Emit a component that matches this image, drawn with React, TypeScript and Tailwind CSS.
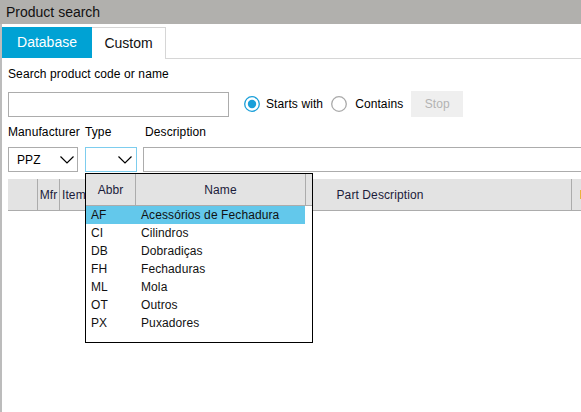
import React from "react";

const Chevron = () => (
  <svg width="14" height="8" viewBox="0 0 14 8" className="block">
    <polyline points="0.5,0.5 7,7 13.5,0.5" fill="none" stroke="#000" strokeWidth="1.2" />
  </svg>
);

const Radio = ({ on }: { on: boolean }) => (
  <svg width="16" height="16" viewBox="0 0 16 16" className="block shrink-0">
    <circle cx="8" cy="8" r="7.3" fill="#fff" stroke={on ? "#1a9fd9" : "#a9a9a9"} strokeWidth="1.3" />
    {on && <circle cx="8" cy="8" r="4.2" fill="#1a9fd9" />}
  </svg>
);

const rows: [string, string][] = [
  ["AF", "Acessórios de Fechadura"],
  ["CI", "Cilindros"],
  ["DB", "Dobradiças"],
  ["FH", "Fechaduras"],
  ["ML", "Mola"],
  ["OT", "Outros"],
  ["PX", "Puxadores"],
];

export default function App() {
  return (
    <div className="relative w-[581px] h-[412px] overflow-hidden bg-white font-['Liberation_Sans',Arial,sans-serif] text-[12px] tracking-[0.1px] text-black">
      <div className="h-[24px] bg-[#b1b0ad] pl-[6px] text-[14px] leading-[25px] tracking-normal text-[#111]">Product search</div>
      <div className="h-[388px] border-l-2 border-[#bcbcbc]">
        <div className="flex h-[35px] pt-[3px]">
          <div className="flex h-[31px] w-[90px] shrink-0 items-center justify-center bg-[#00a2d4] text-[14px] tracking-normal text-white">Database</div>
          <div className="flex h-[32px] w-[74px] shrink-0 items-center justify-center border-t border-r border-[#d6d6d6] text-[14px] tracking-normal text-[#111]">Custom</div>
          <div className="flex-1 border-b border-[#d6d6d6]" />
        </div>
        <div className="pl-[6px]">
          <div className="mt-[8px] leading-[14px]">Search product code or name</div>
          <div className="mt-[10px] flex h-[26px] items-center">
            <div className="h-[25px] w-[221px] shrink-0 border border-[#acacac]" />
            <div className="ml-[15px]"><Radio on /></div>
            <span className="ml-[6px]">Starts with</span>
            <div className="ml-[8px]"><Radio on={false} /></div>
            <span className="ml-[8px]">Contains</span>
            <div className="ml-[8px] flex h-[26px] w-[52px] shrink-0 items-center justify-center bg-[#efefef] text-[#b3b3b3]">Stop</div>
          </div>
          <div className="mt-[8px] flex leading-[14px]">
            <span className="w-[77px] shrink-0">Manufacturer</span>
            <span className="w-[60px] shrink-0">Type</span>
            <span>Description</span>
          </div>
          <div className="mt-[8px] flex h-[25px]">
            <div className="flex w-[70px] shrink-0 items-center justify-between border border-[#acacac] pl-[8px] pr-[3px]">
              <span>PPZ</span>
              <Chevron />
            </div>
            <div className="ml-[7px] flex w-[52px] shrink-0 items-center justify-end border border-[#7dcdee] pr-[4px]">
              <Chevron />
            </div>
            <div className="ml-[6px] w-[500px] shrink-0 border border-[#acacac]" />
          </div>
          <div className="mt-[7px] flex h-[32px] w-[600px] border-b border-[#acacac] bg-[#e3e3e3] text-[#1b1b3a]">
            <div className="w-[30px] shrink-0 border-r border-[#acacac]" />
            <div className="flex w-[22px] shrink-0 items-center justify-center border-r border-[#acacac]">Mfr</div>
            <div className="flex w-[129px] shrink-0 items-center border-r border-[#acacac] pl-[2px]">Item</div>
            <div className="flex w-[383px] shrink-0 items-center justify-center border-r border-[#acacac]">Part Description</div>
            <div className="flex flex-1 items-center pl-[8px]">
              <div className="h-[9px] w-[3px] bg-[#e8b43c]" />
            </div>
          </div>
        </div>
      </div>

      <div className="absolute left-[85px] top-[173px] h-[170px] w-[228px] border border-black bg-white">
        <div className="flex h-[32px] border-b border-[#acacac] bg-[#e3e3e3] text-[#1b1b3a]">
          <div className="flex w-[50px] shrink-0 items-center justify-center border-r border-[#acacac]">Abbr</div>
          <div className="flex w-[170px] shrink-0 items-center justify-center border-r border-[#acacac]">Name</div>
          <div className="flex-1" />
        </div>
        <div className="w-[219px]">
          {rows.map(([a, n], i) => (
            <div key={a} className={`flex h-[18px] items-center leading-[18px] text-[#111] ${i === 0 ? "bg-[#63c8eb]" : ""}`}>
              <span className="w-[50px] shrink-0 pl-[5px]">{a}</span>
              <span className="pl-[5px]">{n}</span>
            </div>
          ))}
        </div>
      </div>
    </div>
  );
}
